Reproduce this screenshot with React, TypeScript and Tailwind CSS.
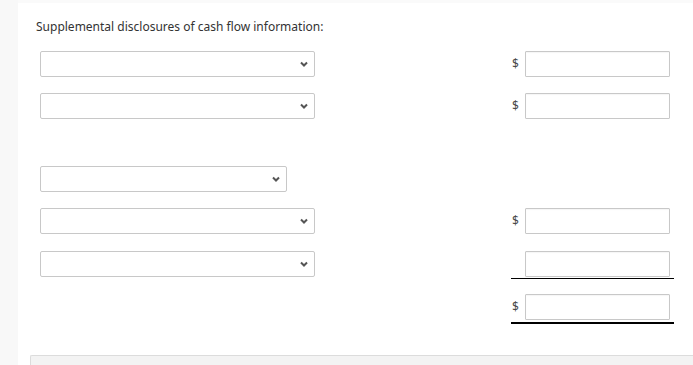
import React from 'react';

const Chevron = () => (
  <svg width="8" height="6" viewBox="0 0 8 6" className="shrink-0">
    <path d="M1 1.5 L4 4.5 L7 1.5" fill="none" stroke="#555" strokeWidth="2" />
  </svg>
);

const SelectBox = ({ wide = true }: { wide?: boolean }) => (
  <div
    className={`flex h-[26px] items-center justify-end rounded-[2px] border border-[#c8c8c8] bg-white pr-[6px] ${
      wide ? 'w-[275px]' : 'w-[247px]'
    }`}
  >
    <Chevron />
  </div>
);

const AmountBox = ({ dollar = true, rule }: { dollar?: boolean; rule?: 'single' | 'double' }) => (
  <div
    className={`flex w-[163px] items-center pr-[4px] ${
      rule === 'single' ? 'border-b border-black pb-[1px]' : rule === 'double' ? 'border-b-[2px] border-black pb-[2px]' : ''
    }`}
  >
    <span className="w-[14px] pl-[1px] text-[12px] leading-none text-[#4a4a4a]">{dollar ? '$' : ''}</span>
    <div className="h-[26px] w-[145px] rounded-[1px] border border-[#c8c8c8] bg-white shadow-[inset_0_1px_1px_rgba(0,0,0,0.04)]" />
  </div>
);

export default function App() {
  return (
    <div className="flex h-[365px] w-full overflow-hidden bg-white" style={{ fontFamily: '"Noto Sans", "DejaVu Sans", sans-serif' }}>
      {/* left rail */}
      <div className="w-[18px] shrink-0 bg-[#f8f8f8]" />

      <div className="flex flex-1 flex-col">
        <div className="h-[3px] bg-[#fafafa]" />

        <div className="flex flex-1 flex-col pl-[18px] pt-[16px]">
          <p className="h-[16px] text-[12px] leading-[16px] text-[#333]">
            Supplemental disclosures of cash flow information:
          </p>

          <div className="mt-[16px] flex items-center pl-[4px] pr-[19px]">
            <SelectBox />
            <div className="ml-auto"><AmountBox /></div>
          </div>

          <div className="mt-[16px] flex items-center pl-[4px] pr-[19px]">
            <SelectBox />
            <div className="ml-auto"><AmountBox /></div>
          </div>

          <div className="mt-[47px] flex items-center pl-[4px]">
            <SelectBox wide={false} />
          </div>

          <div className="mt-[16px] flex items-center pl-[4px] pr-[19px]">
            <SelectBox />
            <div className="ml-auto"><AmountBox /></div>
          </div>

          <div className="mt-[17px] flex items-start pl-[4px] pr-[19px]">
            <SelectBox />
            <div className="ml-auto"><AmountBox dollar={false} rule="single" /></div>
          </div>

          <div className="mt-[15px] flex items-center pr-[19px]">
            <div className="ml-auto"><AmountBox rule="double" /></div>
          </div>
        </div>

        {/* footer panel */}
        <div className="ml-[12px] h-[10px] rounded-tl-[2px] border-l border-t border-[#dcdcdc] bg-[#f3f3f3]" />
      </div>
    </div>
  );
}
